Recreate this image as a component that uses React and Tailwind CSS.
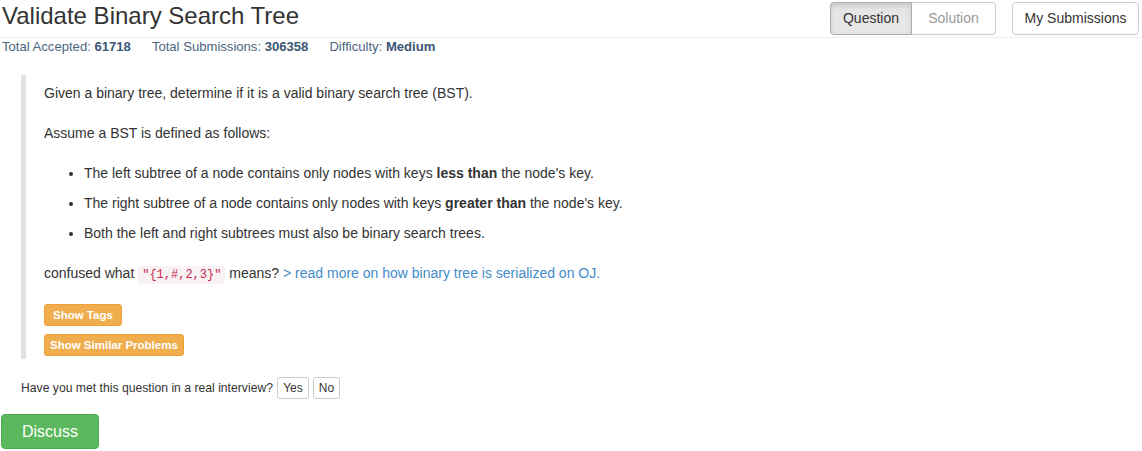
export default function App() {
  return (
    <div className="w-[1142px] h-[451px] bg-white text-[#333] text-[14px] leading-[20px]" style={{ fontFamily: '"Liberation Sans", Arial, sans-serif' }}>
      <div className="flex items-start justify-between border-b border-[#eee] h-[38px] pr-[3px]">
        <h3 className="text-[24px] leading-[30px] pl-[2px] pt-[1px] text-[#333]">Validate Binary Search Tree</h3>
        <div className="flex items-start pt-[2px]">
          <div className="flex">
            <button className="h-[33px] w-[82px] pb-[2px] border border-[#adadad] bg-[#e6e6e6] rounded-l-[4px] text-[14px] leading-[20px] text-[#333] shadow-[inset_0_3px_5px_rgba(0,0,0,0.125)]">Question</button>
            <button className="h-[33px] w-[84px] pb-[2px] border border-l-0 border-[#ccc] bg-white rounded-r-[4px] text-[14px] leading-[20px] text-[#999]">Solution</button>
          </div>
          <button className="ml-[16px] h-[33px] w-[127px] pb-[2px] border border-[#ccc] bg-white rounded-[4px] text-[14px] leading-[20px] text-[#333]">My Submissions</button>
        </div>
      </div>
      <div className="flex gap-[21px] pl-[2px] text-[13.1px] leading-[16px] text-[#4b6580] pt-[1px]">
        <span>Total Accepted: <b className="text-[#3a5673]">61718</b></span>
        <span>Total Submissions: <b className="text-[#3a5673]">306358</b></span>
        <span>Difficulty: <b className="text-[#3a5673]">Medium</b></span>
      </div>
      <div className="mt-[20px] ml-[21px] border-l-[5px] border-[#e2e2e2] pl-[18px] pt-[8px] pb-[3px]">
        <p>Given a binary tree, determine if it is a valid binary search tree (BST).</p>
        <p className="mt-[20px]">Assume a BST is defined as follows:</p>
        <ul className="mt-[20px] list-disc pl-[40px]">
          <li>The left subtree of a node contains only nodes with keys <b>less than</b> the node's key.</li>
          <li className="mt-[10px]">The right subtree of a node contains only nodes with keys <b>greater than</b> the node's key.</li>
          <li className="mt-[10px]">Both the left and right subtrees must also be binary search trees.</li>
        </ul>
        <p className="mt-[20px]">
          confused what{" "}
          <code className="text-[12px] text-[#c7254e] bg-[#f9f2f4] px-[4px] py-[2px] rounded-[4px]" style={{ fontFamily: '"Liberation Mono", "DejaVu Sans Mono", monospace' }}>"{"{1,#,2,3}"}"</code>{" "}
          means? <span className="text-[#428bca]">&gt; read more on how binary tree is serialized on OJ.</span>
        </p>
        <div className="mt-[19px] flex flex-col items-start gap-[8px]">
          <button className="h-[22px] px-[8px] bg-[#f0ad4e] border border-[#eea236] rounded-[3px] text-white text-[11.5px] font-bold leading-[18px]">Show Tags</button>
          <button className="h-[22px] px-[5px] bg-[#f0ad4e] border border-[#eea236] rounded-[3px] text-white text-[11.5px] font-bold leading-[18px]">Show Similar Problems</button>
        </div>
      </div>
      <div className="mt-[18px] ml-[21px] flex items-center text-[12.2px] h-[22px]">
        <span>Have you met this question in a real interview?</span>
        <button className="ml-[4px] h-[22px] w-[32px] border border-[#ccc] bg-white rounded-[3px] text-[12px] text-[#333]">Yes</button>
        <button className="ml-[4px] h-[22px] w-[27px] border border-[#ccc] bg-white rounded-[3px] text-[12px] text-[#333]">No</button>
      </div>
      <button className="mt-[15px] ml-[1px] h-[35px] w-[98px] bg-[#5cb85c] border border-[#4cae4c] rounded-[4px] text-white text-[16px]">Discuss</button>
    </div>
  );
}
